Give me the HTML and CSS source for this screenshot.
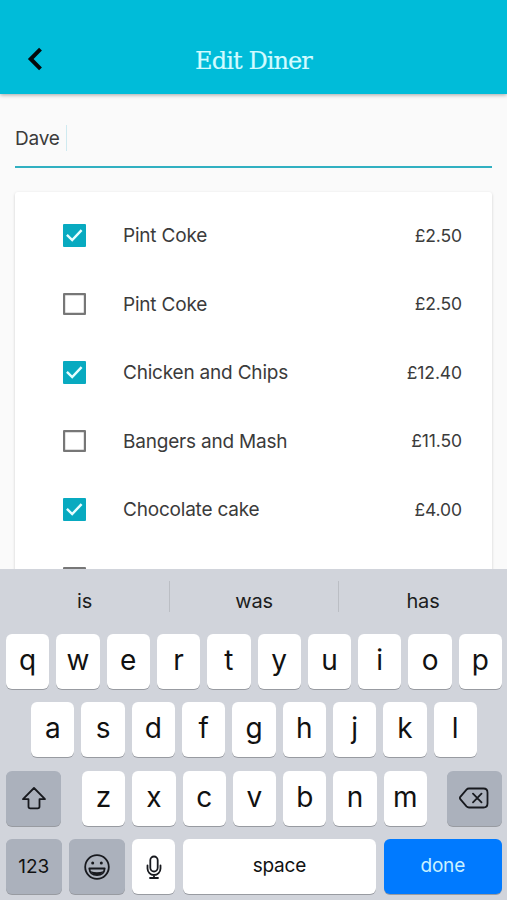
FILE: index.html
```html
<!DOCTYPE html>
<html lang="en">
<head>
<meta charset="utf-8">
<title>Edit Diner</title>
<link rel="stylesheet" href="styles.css">
</head>
<body>
<div class="app">
  <header class="header">
    <svg class="back" width="18" height="28" viewBox="0 0 18 28"><path d="M14.500 4.200 4.700 14l9.800 9.800" fill="none" stroke="#05090b" stroke-width="4"/></svg>
    <h1 class="title">Edit Diner</h1>
  </header>
  <main class="content">
    <div class="field"><span>Dave</span><i class="caret"></i></div>
    <ul class="card">
      <li class="row"><span class="box checked"><svg viewBox="0 0 23 23"><path d="M4 11.200 9.400 16.400 19 6.200"/></svg></span><span class="name">Pint Coke</span><span class="price">£2.50</span></li>
      <li class="row"><span class="box"></span><span class="name">Pint Coke</span><span class="price">£2.50</span></li>
      <li class="row"><span class="box checked"><svg viewBox="0 0 23 23"><path d="M4 11.200 9.400 16.400 19 6.200"/></svg></span><span class="name">Chicken and Chips</span><span class="price">£12.40</span></li>
      <li class="row"><span class="box"></span><span class="name">Bangers and Mash</span><span class="price">£11.50</span></li>
      <li class="row"><span class="box checked"><svg viewBox="0 0 23 23"><path d="M4 11.200 9.400 16.400 19 6.200"/></svg></span><span class="name">Chocolate cake</span><span class="price">£4.00</span></li>
      <li class="row"><span class="box"></span></li>
    </ul>
  </main>
  <section class="keyboard">
    <div class="suggestions"><span>is</span><span>was</span><span>has</span></div>
    <div class="keys">
      <div class="keyrow"><b>q</b><b>w</b><b>e</b><b>r</b><b>t</b><b>y</b><b>u</b><b>i</b><b>o</b><b>p</b></div>
      <div class="keyrow"><b>a</b><b>s</b><b>d</b><b>f</b><b>g</b><b>h</b><b>j</b><b>k</b><b>l</b></div>
      <div class="keyrow spread">
        <b class="grey shift"><svg width="26" height="24" viewBox="0 0 26 24"><path d="M13 2 24 13.200h-5.500v7.300q0 1.800-1.800 1.800H9.300q-1.800 0-1.800-1.800v-7.300H2Z"/></svg></b>
        <div class="letters"><b>z</b><b>x</b><b>c</b><b>v</b><b>b</b><b>n</b><b>m</b></div>
        <b class="grey shift"><svg width="30" height="22" viewBox="0 0 30 22"><path d="M10 1.500h14.500q4 0 4 4v11q0 4-4 4H10q-1.500 0-2.500-1.100L1.300 12.200q-.8-1.200 0-2.400L7.500 2.600Q8.500 1.500 10 1.500ZM14 6.700l8.500 8.600M22.500 6.700l-8.500 8.600"/></svg></b>
      </div>
      <div class="keyrow bottom">
        <b class="grey word numbers">123</b>
        <b class="grey emoji"><svg width="28" height="28" viewBox="0 0 28 28"><circle cx="14" cy="14" r="11.800"/><circle class="solid" cx="9.700" cy="10" r="1.500"/><circle class="solid" cx="18.300" cy="10" r="1.500"/><path d="M6.300 15.500h15.400c-.4 4.300-3.500 6.700-7.700 6.700s-7.300-2.400-7.700-6.700Z"/><path class="solid" d="M7.700 18.300q6.300 1.800 12.600 0-2 3.600-6.300 3.600t-6.300-3.600Z"/></svg></b>
        <b><svg width="16" height="26" viewBox="0 0 16 26"><rect x="4.300" y="2.500" width="7.400" height="15" rx="3.700"/><path d="M1.500 11.500v3a6.500 6.500 0 0 0 13 0v-3M8 21v3M4 24h8"/></svg></b>
        <b class="word">space</b>
        <b class="word done">done</b>
      </div>
    </div>
  </section>
</div>
</body>
</html>
```
FILE: styles.css
```css
* { box-sizing: border-box; }
body { margin: 0; font-family: Inter, "Liberation Sans", sans-serif; color: #3b3b3b; }
.app { display: flex; flex-direction: column; height: 900px; overflow: hidden; background: #fafafa; }

.header {
  display: grid;
  grid-template-columns: 60px 1fr 60px;
  align-items: center;
  height: 94px;
  flex: none;
  padding-top: 26px;
  background: #00bcd9;
  box-shadow: 0 1px 4px rgba(0, 0, 0, .35);
  z-index: 1;
}
.back { margin-left: 26px; margin-top: -2px; }
.title {
  margin: 0;
  padding-top: 2px;
  text-align: center;
  font: 400 24px/30px "Roboto Slab", "DejaVu Serif", serif;
  letter-spacing: -.9px;
  -webkit-text-stroke: .2px #d2fbff;
  color: #d2fbff;
}

.content { flex: 1; min-height: 0; overflow: hidden; padding: 17px 15px 0; }
.field {
  display: flex;
  align-items: center;
  height: 57px;
  margin-bottom: 24px;
  padding-bottom: 3px;
  background: linear-gradient(#31b0c1, #31b0c1) bottom / 100% 2.500px no-repeat;
  font-size: 19px;
  letter-spacing: -.2px;
}
.caret { width: 1px; height: 26px; margin-left: 6px; background: #cfeaf0; }
.card {
  margin: 0;
  padding: 9px 30px 0 47px;
  list-style: none;
  height: 420px;
  background: #fff;
  border-radius: 3px;
  box-shadow: 0 1px 3px rgba(0, 0, 0, .18);
}
.row { display: flex; align-items: center; height: 68.500px; font-size: 19px; }
.box { width: 22.500px; height: 22.500px; margin: 0 37.500px 0 1px; box-shadow: inset 0 0 0 2.200px #777; flex: none; border-radius: 1px; }
.checked { box-shadow: none; background: #08aac0; }
.checked svg { display: block; fill: none; stroke: #e8feff; stroke-width: 2.500; }
.name { flex: 1; letter-spacing: -.2px; padding-top: 1px; }
.price { font-size: 17.500px; letter-spacing: -.1px; }

.keyboard { height: 331px; flex: none; background: #d1d4db; color: #111; }
.suggestions { display: grid; grid-template-columns: repeat(3, 1fr); height: 64.500px; padding-top: 12px; }
.suggestions span { height: 31px; line-height: 40px; text-align: center; font-size: 20px; letter-spacing: -.2px; color: #1c1d20; }
.suggestions span + span { border-left: 1px solid #bbbec4; }
.keys { display: grid; gap: 13.500px; padding: 0 5px 0 6px; }
.keyrow { display: flex; justify-content: center; gap: 7px; height: 55px; }
.keyrow b {
  display: flex;
  align-items: center;
  justify-content: center;
  width: 43.300px;
  flex: none;
  height: 55px;
  padding-bottom: 3px;
  border-radius: 6px;
  background: #fff;
  box-shadow: 0 1px 0 #989ba1;
  font-weight: 400;
  font-size: 28px;
}
.keyrow svg { fill: none; stroke: #17191e; stroke-width: 1.800; stroke-linejoin: round; stroke-linecap: round; margin-top: 3px; }
.keyrow .solid { fill: #17191e; stroke: none; }
.keyrow .grey { background: #abb1bc; }
.spread { justify-content: space-between; }
.letters { display: flex; gap: 7px; padding-left: 1px; }
.keyrow .shift { width: 55px; }
.bottom { display: grid; grid-template-columns: 55.500px 56px 43px 193.500px 118.500px; justify-content: space-between; gap: 0; }
.bottom b { width: auto; }
.keyrow .word { font-size: 19px; letter-spacing: -.2px; }
.keyrow .numbers { padding-bottom: 0; letter-spacing: 0; }
.keyrow .done { background: #007aff; color: #c9f1ff; }
```
